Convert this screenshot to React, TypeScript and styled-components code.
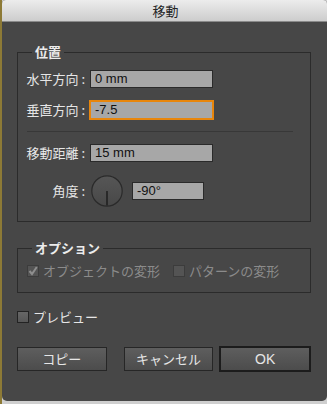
import { type FC } from "react";
import styled, { createGlobalStyle } from "styled-components";

const GlobalStyle = createGlobalStyle`
  html, body {
    margin: 0;
    padding: 0;
    background: #cfcfcf;
  }
  body {
    font-family: "Noto Sans CJK JP", "Noto Sans", sans-serif;
  }
`;

const Desktop = styled.div`
  width: 327px;
  height: 404px;
  background: linear-gradient(to right, #8d7a36 0 2px, #cfcfcf 2px);
  overflow: hidden;
`;

const Window = styled.div`
  margin-left: 2px;
  width: 325px;
  height: 401px;
  display: flex;
  flex-direction: column;
  background: #474747;
  border-radius: 4px 4px 5px 5px;
  overflow: hidden;
`;

const TitleBar = styled.div`
  height: 22px;
  flex: none;
  display: flex;
  align-items: center;
  justify-content: center;
  background: linear-gradient(#ececec, #cdcdcd);
  border-bottom: 1px solid #8a8a8a;
  box-sizing: border-box;
  font-size: 13px;
  line-height: 16px;
  color: #262626;
  padding-left: 2px;
`;

const Body = styled.div`
  flex: 1;
  padding: 23px 16px 0 15px;
  display: flex;
  flex-direction: column;
`;

const Group = styled.fieldset<{ $gap?: number }>`
  margin: 0;
  margin-top: ${({ $gap }) => $gap ?? 0}px;
  min-width: 0;
  border: 1px solid #2b2b2b;
  padding: 0 9px;
`;

const Legend = styled.legend`
  margin-left: 5px;
  padding: 0 3px 0 3px;
  font-size: 13px;
  line-height: 14px;
  font-weight: 600;
  color: #ececec;
`;

const FieldGrid = styled.div`
  display: grid;
  grid-template-columns: 63px 1fr;
  align-items: center;
  padding: 11px 0 14px;
`;

const Label = styled.span`
  font-size: 13px;
  line-height: 18px;
  color: #e6e6e6;
  white-space: nowrap;
  justify-self: end;
  padding-right: 5px;
`;

const Row = styled.div<{ $top: number }>`
  display: contents;
  & > * {
    margin-top: ${({ $top }) => $top}px;
  }
`;

const Input = styled.div<{ $width?: number; $focused?: boolean }>`
  box-sizing: border-box;
  width: ${({ $width }) => $width ?? 123}px;
  height: 18px;
  background: #a7a7a7;
  border: 1px solid ${({ $focused }) => ($focused ? "#e8860c" : "#2a2a2a")};
  box-shadow: ${({ $focused }) => ($focused ? "0 0 0 1px #e8860c" : "none")};
  font-family: "Liberation Sans", Arial, sans-serif;
  font-size: 13px;
  line-height: 16px;
  color: #111;
  padding-left: 4px;
`;

const Separator = styled.div`
  grid-column: 1 / -1;
  height: 1px;
  background: #383838;
  margin: 12px 8px 0 0;
`;

const AngleBox = styled.div`
  display: flex;
  align-items: center;
  gap: 9px;
  height: 32px;
`;

const Dial = styled.svg`
  display: block;
  margin-left: 1px;
`;

const OptionRow = styled.div`
  display: flex;
  align-items: center;
  height: 16px;
  padding: 8px 0 13px;
  gap: 13px;
`;

const CheckItem = styled.label<{ $disabled?: boolean }>`
  display: flex;
  align-items: center;
  gap: 4px;
  font-size: 13px;
  line-height: 16px;
  color: ${({ $disabled }) => ($disabled ? "#8b8b8b" : "#e6e6e6")};
  white-space: nowrap;
`;

const Box = styled.span<{ $disabled?: boolean }>`
  box-sizing: border-box;
  width: 12px;
  height: 12px;
  flex: none;
  display: flex;
  align-items: center;
  justify-content: center;
  border: 1px solid ${({ $disabled }) => ($disabled ? "#3c3c3c" : "#232323")};
  background: ${({ $disabled }) =>
    $disabled ? "#545454" : "linear-gradient(#666, #575757)"};
`;

const PreviewRow = styled.div`
  margin-top: 16px;
  height: 16px;
  display: flex;
  align-items: center;
`;

const ButtonRow = styled.div`
  margin-top: 21px;
  display: flex;
  align-items: center;
`;

const Button = styled.div<{ $primary?: boolean; $gap?: number }>`
  box-sizing: border-box;
  width: ${({ $primary }) => ($primary ? 92 : 90)}px;
  height: ${({ $primary }) => ($primary ? 26 : 24)}px;
  margin-left: ${({ $gap }) => $gap ?? 0}px;
  display: flex;
  align-items: center;
  justify-content: center;
  border: ${({ $primary }) => ($primary ? "2px solid #1c1c1c" : "1px solid #262626")};
  background: linear-gradient(#5e5e5e, #4c4c4c);
  font-size: ${({ $primary }) => ($primary ? 14 : 13)}px;
  line-height: 16px;
  color: #e6e6e6;
  font-family: ${({ $primary }) =>
    $primary
      ? `"Liberation Sans", Arial, sans-serif`
      : `"Noto Sans CJK JP", sans-serif`};
`;

type CheckProps = { label: string; checked?: boolean; disabled?: boolean };

const Check: FC<CheckProps> = ({ label, checked, disabled }) => (
  <CheckItem $disabled={disabled}>
    <Box $disabled={disabled}>
      {checked && (
        <svg width="10" height="10" viewBox="0 0 10 10">
          <path d="M1.5 5 L4 8 L8.8 1" stroke="#8e8e8e" strokeWidth="2" fill="none" />
        </svg>
      )}
    </Box>
    {label}
  </CheckItem>
);

const App: FC = () => {
  return (
    <Desktop>
      <GlobalStyle />
      <Window>
        <TitleBar>移動</TitleBar>
        <Body>
          <Group>
            <Legend>位置</Legend>
            <FieldGrid>
              <Row $top={0}>
                <Label>水平方向 :</Label>
                <Input>0 mm</Input>
              </Row>
              <Row $top={13}>
                <Label>垂直方向 :</Label>
                <Input $focused>-7.5</Input>
              </Row>
              <Separator />
              <Row $top={12}>
                <Label>移動距離 :</Label>
                <Input>15 mm</Input>
              </Row>
              <Row $top={13}>
                <Label>角度 :</Label>
                <AngleBox>
                  <Dial width="32" height="32" viewBox="0 0 32 32">
                    <defs>
                      <linearGradient id="dialFill" x1="0" y1="0" x2="0" y2="1">
                        <stop offset="0" stopColor="#565656" />
                        <stop offset="1" stopColor="#484848" />
                      </linearGradient>
                    </defs>
                    <circle cx="16" cy="16" r="15.2" fill="url(#dialFill)" stroke="#2a2a2a" strokeWidth="1.2" />
                    <line x1="16" y1="16" x2="16" y2="30.5" stroke="#1e1e1e" strokeWidth="1.5" />
                  </Dial>
                  <Input $width={72}>-90°</Input>
                </AngleBox>
              </Row>
            </FieldGrid>
          </Group>

          <Group $gap={19}>
            <Legend>オプション</Legend>
            <OptionRow>
              <Check label="オブジェクトの変形" checked disabled />
              <Check label="パターンの変形" disabled />
            </OptionRow>
          </Group>

          <PreviewRow>
            <Check label="プレビュー" />
          </PreviewRow>

          <ButtonRow>
            <Button>コピー</Button>
            <Button $gap={17}>キャンセル</Button>
            <Button $gap={6} $primary>
              OK
            </Button>
          </ButtonRow>
        </Body>
      </Window>
    </Desktop>
  );
};

export default App;
